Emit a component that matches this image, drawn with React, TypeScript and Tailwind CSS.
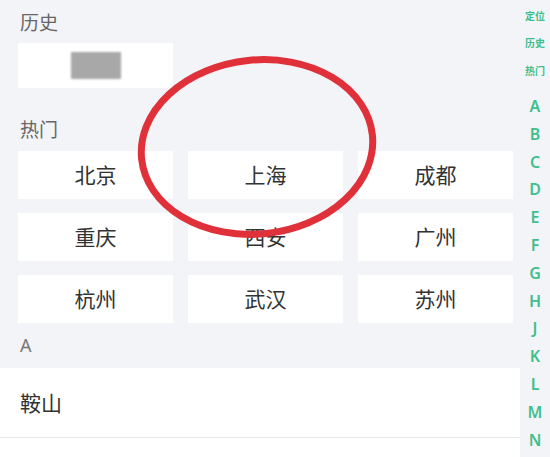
import React from 'react';

const hotCities = ['北京', '上海', '成都', '重庆', '西安', '广州', '杭州', '武汉', '苏州'];
const topIndex = ['定位', '历史', '热门'];
const letters = ['A', 'B', 'C', 'D', 'E', 'F', 'G', 'H', 'J', 'K', 'L', 'M', 'N'];

const cjk = { fontFamily: '"Noto Sans CJK SC", "Noto Sans", sans-serif' };

export default function App() {
  return (
    <div className="relative w-[550px] h-[457px] overflow-hidden bg-[#f3f4f8]" style={cjk}>
      {/* Main list */}
      <div className="w-[520px] flex flex-col">
        <div className="h-[43px] pl-5 flex items-center text-[19px] text-[#666] pt-[1px]">历史</div>
        <div className="pl-[18px]">
          <div className="w-[155px] h-[45px] bg-white flex items-center justify-center">
            <div className="w-[50px] h-[27px] bg-[#a8a8a8] blur-[1px]" />
          </div>
        </div>

        <div className="h-[63px] pl-5 flex items-center text-[19px] text-[#666] pt-[20px]">热门</div>
        <div className="pl-[18px] grid grid-cols-[155px_155px_155px] gap-x-[15px] gap-y-[14px]">
          {hotCities.map((c) => (
            <div key={c} className="h-[48px] bg-white flex items-center justify-center text-[21px] text-[#333]">
              {c}
            </div>
          ))}
        </div>

        <div className="h-[45px] pl-5 flex items-center text-[18px] text-[#777]" style={{ fontFamily: '"Noto Sans", sans-serif' }}>A</div>
        <div className="bg-white h-[70px] pl-5 flex items-center text-[21px] text-[#333] border-b border-[#e6e6e6]">鞍山</div>
        <div className="bg-white h-[30px]" />
      </div>

      {/* Index sidebar */}
      <div className="absolute top-0 right-0 w-[30px] pt-[2px] flex flex-col items-center text-[#3fbf8e]">
        {topIndex.map((t) => (
          <div key={t} className="h-[27.5px] flex items-center text-[10px] font-bold leading-none">{t}</div>
        ))}
        <div className="mt-[7.6px] flex flex-col items-center" style={{ fontFamily: '"Noto Sans", sans-serif' }}>
          {letters.map((l) => (
            <div key={l} className="h-[27.8px] flex items-center text-[16px] font-semibold leading-none">{l}</div>
          ))}
        </div>
      </div>

      {/* Red annotation circle */}
      <svg className="absolute left-0 top-0 pointer-events-none" width="550" height="457">
        <ellipse cx="257" cy="147" rx="116" ry="87" fill="none" stroke="#e0303a" strokeWidth="7" transform="rotate(-6 257 147)" />
      </svg>
    </div>
  );
}
